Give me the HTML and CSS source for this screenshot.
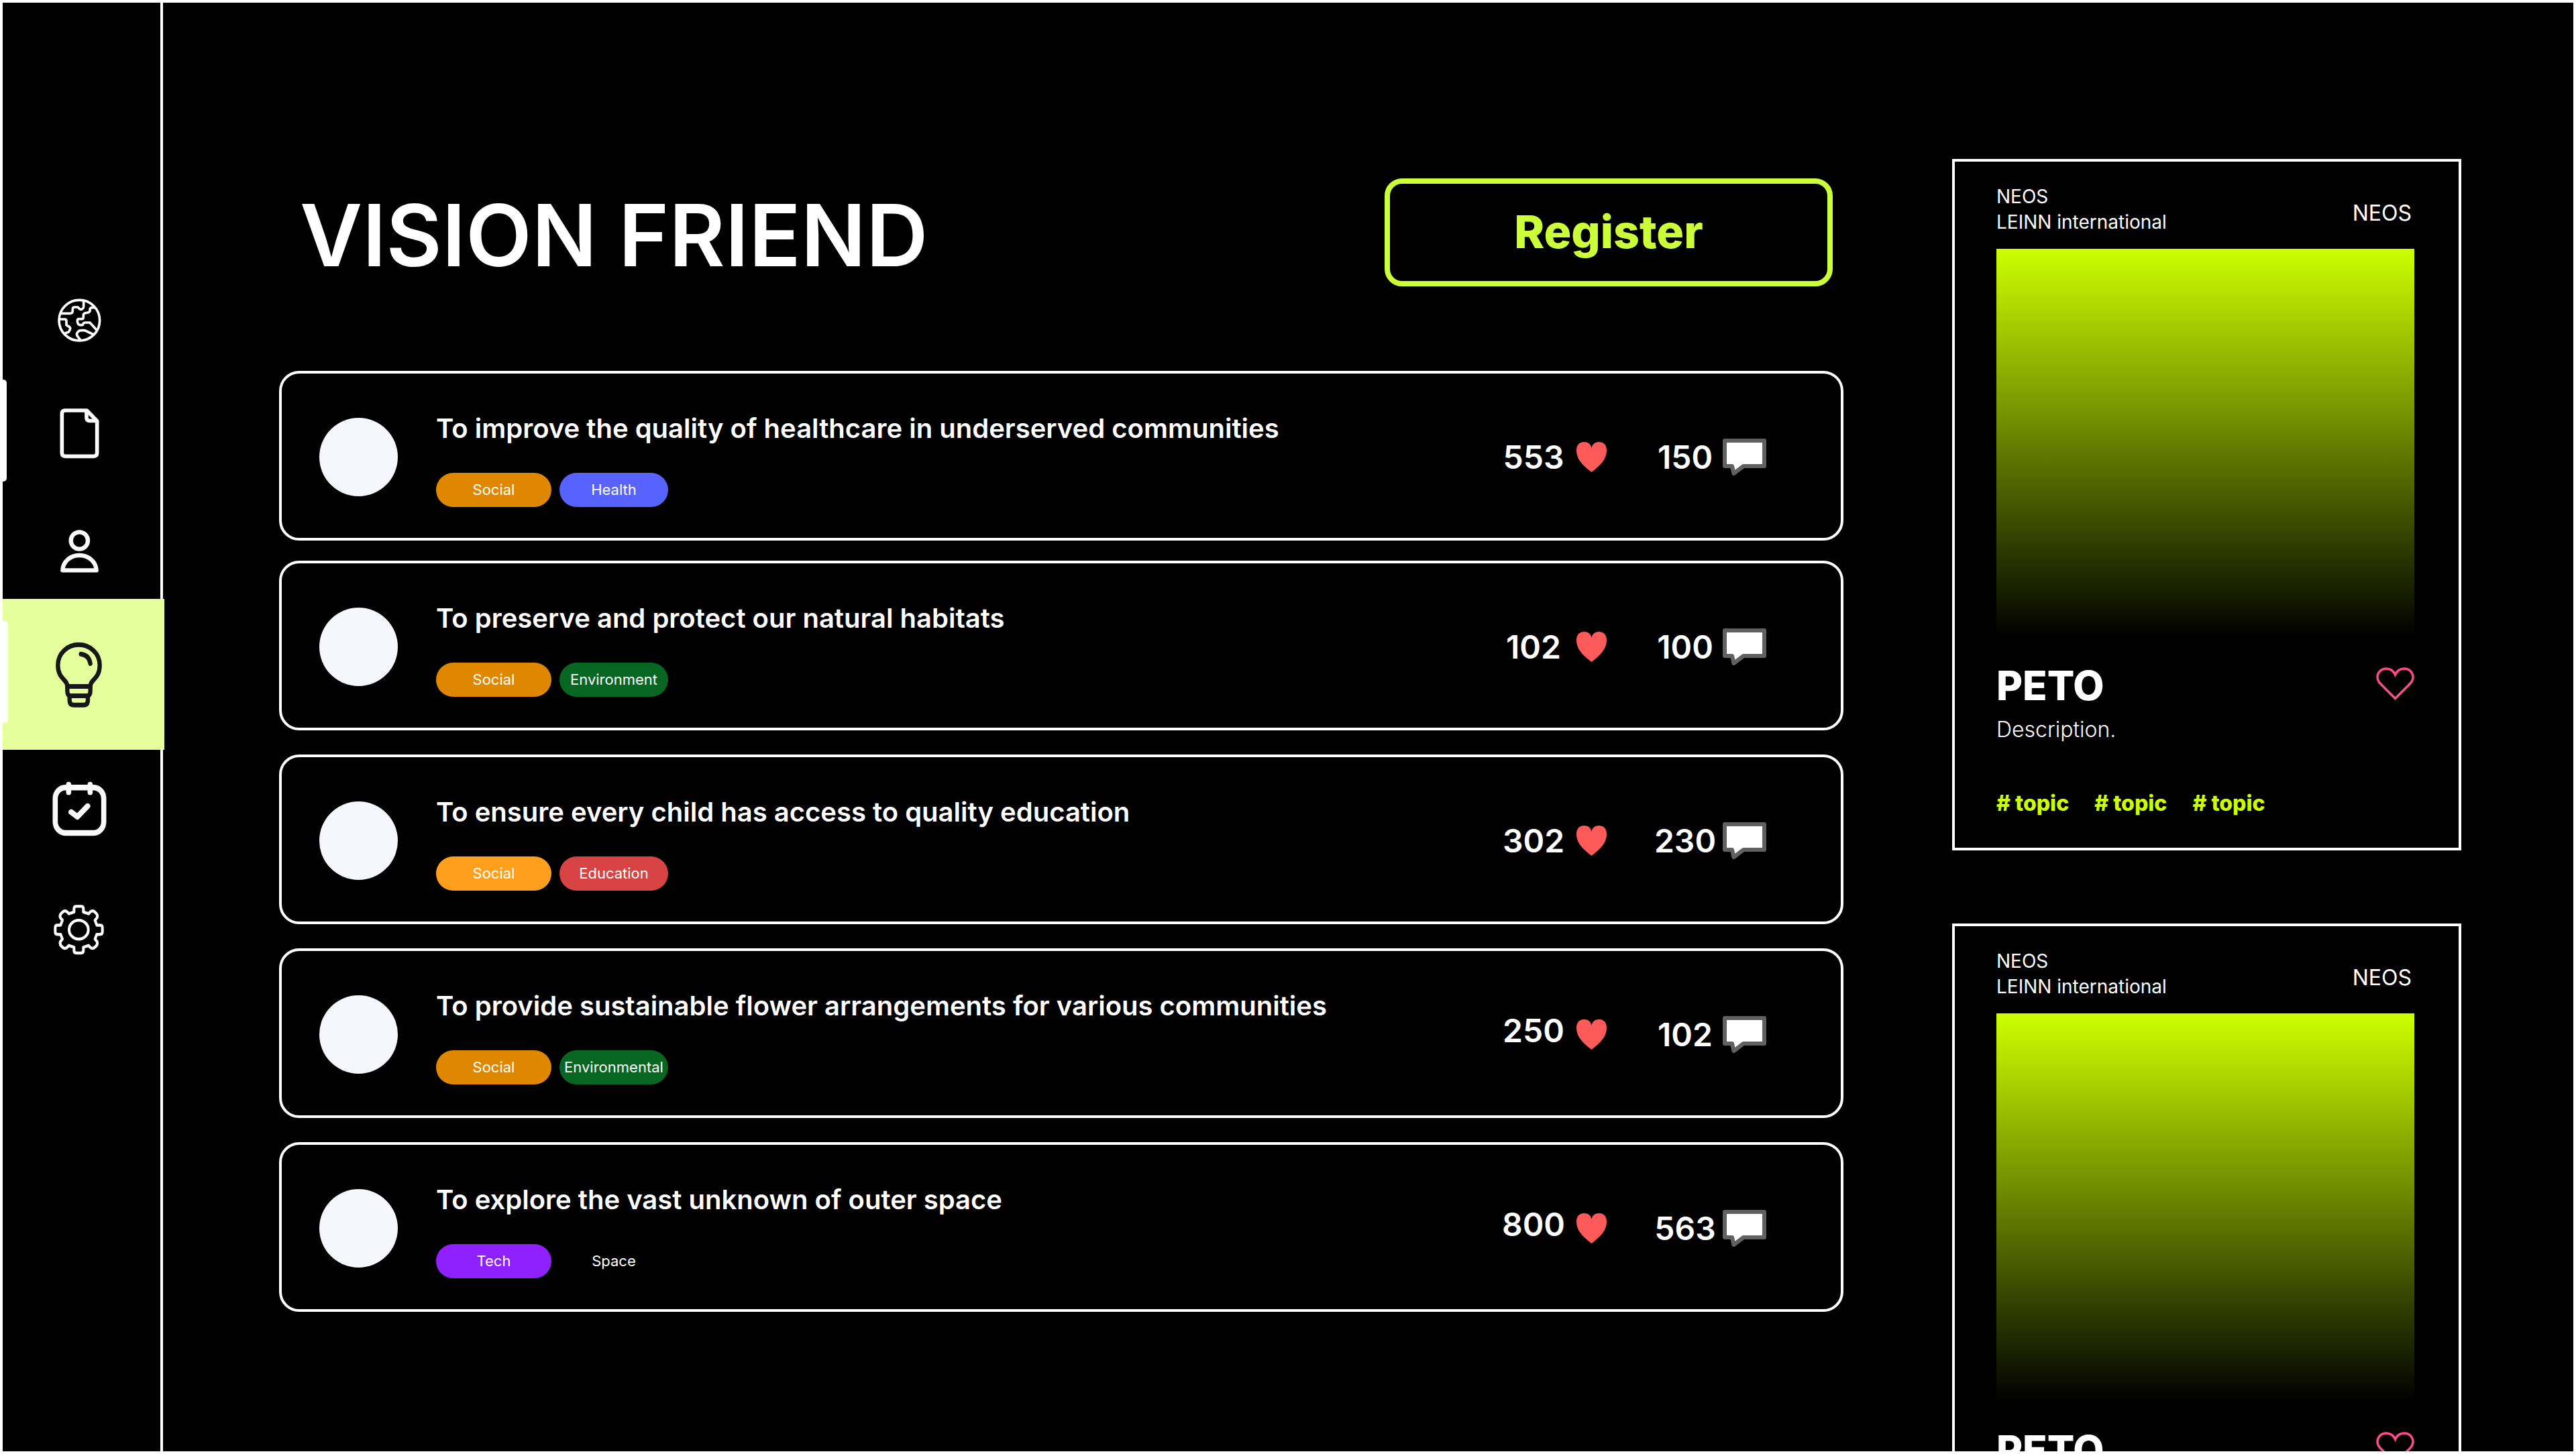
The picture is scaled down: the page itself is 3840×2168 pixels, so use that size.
FILE: index.html
```html
<!DOCTYPE html>
<html lang="en">
<head>
<meta charset="utf-8">
<meta name="viewport" content="width=device-width, initial-scale=1">
<title>Vision Friend</title>
<link rel="stylesheet" href="styles.css">
</head>
<body>
<svg class="sprite" aria-hidden="true">
  <symbol id="heart" viewBox="0 0 45 45">
    <path fill="#ff5a5a" d="M22.500 45C8 34 0 25 0 12.500C0 4 5 0 11.500 0C17 0 21.500 3 22.500 9C23.500 3 28 0 33.500 0C40 0 45 4 45 12.500C45 25 37 34 22.500 45Z"/>
  </symbol>
  <symbol id="comment" viewBox="0 0 65 55">
    <path fill="#fff" stroke="#616161" stroke-width="6" stroke-linejoin="round" d="M3 3H62V41H31L16.500 52L14 41H3Z"/>
  </symbol>
  <symbol id="heart-outline" viewBox="0 0 57 54">
    <path fill="none" stroke="#ff4a8d" stroke-width="3.500" d="M28.500 46.500L7 25C3 21 2 18 2 15C2 7 8 2 15 2C21 2 26 5.500 28.500 11C31 5.500 36 2 42 2C49 2 55 7 55 15C55 18 54 21 50 25Z"/>
  </symbol>
</svg>
<div class="app">
  <nav class="sidebar" aria-label="Main">
    <a class="nav-item" href="#world" aria-label="World">
      <svg class="nav-icon" viewBox="210 81 300 300" fill="none" stroke="#fff" stroke-width="11" stroke-linejoin="round" stroke-linecap="round">
        <circle cx="355" cy="233" r="91"/>
        <path d="M272 202H312Q325 202 325 188V182Q325 174 333 174H348L356 182Q362 186 368 182Q374 178 374 170V146"/>
        <path d="M423 176H408Q402 178 402 186V190Q402 195 396 197L380 201Q373 203 373 210V218Q373 227 365 227H353Q346 227 346 235Q346 252 358 254H366Q371 254 372 248Q374 243 382 243H402L432 276"/>
        <path d="M268 228H290Q297 228 297 236V254L311 263Q316 267 313 274L309 282Q306 288 298 288L290 292"/>
        <path d="M360 322L346 303Q340 294 347 286Q354 277 366 278H376Q384 279 394 285L418 296"/>
      </svg>
    </a>
    <a class="nav-item nav-item--tabbed" href="#documents" aria-label="Documents">
      <svg class="nav-icon" viewBox="210 588 300 300" fill="none" stroke="#fafafa" stroke-width="17" stroke-linejoin="round">
        <path d="M290 636H388L434 683V826Q434 841 419 841H292Q277 841 277 826V651Q277 636 290 636Z"/>
        <path d="M387 638V668Q387 682 401 682H434"/>
      </svg>
    </a>
    <a class="nav-item" href="#profile" aria-label="Profile">
      <svg class="nav-icon" viewBox="210 1113 300 300" fill="none" stroke="#fafafa" stroke-width="19" stroke-linejoin="round">
        <circle cx="355" cy="1215" r="38"/>
        <path d="M280 1348C282 1308 316 1281 355 1281S429 1308 431 1348Z"/>
      </svg>
    </a>
    <a class="nav-item nav-item--tabbed nav-item--active" href="#visions" aria-label="Visions" aria-current="page">
      <svg class="nav-icon" viewBox="210 235 300 300" fill="none" stroke="#171717" stroke-width="19" stroke-linejoin="round" stroke-linecap="round">
        <g transform="scale(1 1.11)">
          <path d="M301 394C301 364 259 366 259 308C259 262 300 226 352 226S446 262 446 308C446 366 404 364 404 394V412Q404 432 390 432H315Q301 432 301 412Z"/>
          <path d="M301 394H404M311 434V448Q311 469 330 469H374Q393 469 393 448V434"/>
          <path d="M362 264Q398 268 404 302"/>
        </g>
      </svg>
    </a>
    <a class="nav-item" href="#calendar" aria-label="Calendar">
      <svg class="nav-icon" viewBox="210 829 300 300" fill="none" stroke="#fafafa" stroke-width="23" stroke-linejoin="round" stroke-linecap="round">
        <g transform="scale(1 1.11)">
          <rect x="247" y="796" width="217" height="183" rx="45"/>
          <path d="M307 785V815M403 785V815M318 895L346 914L392 871"/>
        </g>
      </svg>
    </a>
    <a class="nav-item" href="#settings" aria-label="Settings">
      <svg class="nav-icon" viewBox="210 1368 300 300" fill="none" stroke="#fff" stroke-width="12" stroke-linejoin="round">
        <g transform="scale(1 1.11)">
          <path d="M331 1297V1284Q331 1274 341 1274H363Q373 1274 373 1284V1297L396 1304L403 1297Q411 1290 420 1294L431 1303Q438 1311 434 1320L425 1330L433 1350H447Q458 1350 458 1360V1377Q458 1387 447 1387H433L425 1406L434 1416Q438 1425 431 1433L420 1442Q411 1446 403 1439L396 1432L373 1439V1452Q373 1462 363 1462H341Q331 1462 331 1452V1439L308 1432L301 1439Q293 1446 284 1442L273 1433Q266 1425 270 1416L279 1406L271 1387H257Q247 1387 247 1377V1360Q247 1350 257 1350H271L279 1330L270 1320Q266 1311 273 1303L284 1294Q293 1290 301 1297L308 1304Z"/>
          <ellipse cx="352" cy="1368" rx="43" ry="38"/>
        </g>
      </svg>
    </a>
  </nav>

  <main class="main">
    <header class="main-header">
      <h1 class="page-title">VISION FRIEND</h1>
      <button class="register" type="button">Register</button>
    </header>
    <ul class="visions">
      <li class="vision">
        <span class="avatar"></span>
        <div class="vision-body">
          <h2 class="vision-title">To improve the quality of healthcare in underserved communities</h2>
          <div class="tags"><span class="tag tag--lead tag--social">Social</span><span class="tag tag--health">Health</span></div>
        </div>
        <button class="stat stat--likes" type="button" aria-label="553 likes"><span class="count">553</span><svg class="heart"><use href="#heart"/></svg></button>
        <button class="stat stat--comments" type="button" aria-label="150 comments"><span class="count">150</span><svg class="comment"><use href="#comment"/></svg></button>
      </li>
      <li class="vision">
        <span class="avatar"></span>
        <div class="vision-body">
          <h2 class="vision-title">To preserve and protect our natural habitats</h2>
          <div class="tags"><span class="tag tag--lead tag--social">Social</span><span class="tag tag--environment">Environment</span></div>
        </div>
        <button class="stat stat--likes" type="button" aria-label="102 likes"><span class="count">102</span><svg class="heart"><use href="#heart"/></svg></button>
        <button class="stat stat--comments" type="button" aria-label="100 comments"><span class="count">100</span><svg class="comment"><use href="#comment"/></svg></button>
      </li>
      <li class="vision">
        <span class="avatar"></span>
        <div class="vision-body">
          <h2 class="vision-title">To ensure every child has access to quality education</h2>
          <div class="tags"><span class="tag tag--lead tag--social-bright">Social</span><span class="tag tag--education">Education</span></div>
        </div>
        <button class="stat stat--likes" type="button" aria-label="302 likes"><span class="count">302</span><svg class="heart"><use href="#heart"/></svg></button>
        <button class="stat stat--comments" type="button" aria-label="230 comments"><span class="count">230</span><svg class="comment"><use href="#comment"/></svg></button>
      </li>
      <li class="vision">
        <span class="avatar"></span>
        <div class="vision-body">
          <h2 class="vision-title">To provide sustainable flower arrangements for various communities</h2>
          <div class="tags"><span class="tag tag--lead tag--social">Social</span><span class="tag tag--environment">Environmental</span></div>
        </div>
        <button class="stat stat--likes stat--raised" type="button" aria-label="250 likes"><span class="count">250</span><svg class="heart"><use href="#heart"/></svg></button>
        <button class="stat stat--comments" type="button" aria-label="102 comments"><span class="count">102</span><svg class="comment"><use href="#comment"/></svg></button>
      </li>
      <li class="vision">
        <span class="avatar"></span>
        <div class="vision-body">
          <h2 class="vision-title">To explore the vast unknown of outer space</h2>
          <div class="tags"><span class="tag tag--lead tag--tech">Tech</span><span class="tag tag--space">Space</span></div>
        </div>
        <button class="stat stat--likes stat--raised" type="button" aria-label="800 likes"><span class="count">800</span><svg class="heart"><use href="#heart"/></svg></button>
        <button class="stat stat--comments" type="button" aria-label="563 comments"><span class="count">563</span><svg class="comment"><use href="#comment"/></svg></button>
      </li>
    </ul>
  </main>

  <aside class="projects" aria-label="Projects">
    <article class="card">
      <header class="card-head">
        <p class="card-team">NEOS<br>LEINN international</p>
        <span class="card-brand">NEOS</span>
      </header>
      <div class="card-art"></div>
      <div class="card-title-row">
        <h2 class="card-title">PETO</h2>
        <button class="like" type="button" aria-label="Like"><svg class="like-icon"><use href="#heart-outline"/></svg></button>
      </div>
      <p class="card-text">Description.</p>
      <div class="topics"><a class="topic" href="#topic"># topic</a><a class="topic" href="#topic"># topic</a><a class="topic" href="#topic"># topic</a></div>
    </article>
    <article class="card">
      <header class="card-head">
        <p class="card-team">NEOS<br>LEINN international</p>
        <span class="card-brand">NEOS</span>
      </header>
      <div class="card-art"></div>
      <div class="card-title-row">
        <h2 class="card-title">PETO</h2>
        <button class="like" type="button" aria-label="Like"><svg class="like-icon"><use href="#heart-outline"/></svg></button>
      </div>
      <p class="card-text">Description.</p>
      <div class="topics"><a class="topic" href="#topic"># topic</a><a class="topic" href="#topic"># topic</a><a class="topic" href="#topic"># topic</a></div>
    </article>
  </aside>
</div>
</body>
</html>
```
FILE: styles.css
```css
* {
  box-sizing: border-box;
  margin: 0;
  padding: 0;
}

body {
  background: #000;
  color: #fff;
  font-family: Inter, "Liberation Sans", sans-serif;
}

button {
  background: none;
  border: 0;
  color: inherit;
  font: inherit;
  cursor: pointer;
}

a {
  color: inherit;
  text-decoration: none;
}

.sprite {
  position: absolute;
  width: 0;
  height: 0;
}

.app {
  display: grid;
  grid-template-columns: 239px minmax(0, 1fr) auto;
  height: 100vh;
  border: 4px solid #fff;
  overflow: hidden;
}

/* Sidebar */
.sidebar {
  display: grid;
  grid-template-rows: 130px 208px 143px 225px 176px 184px;
  align-content: start;
  padding-top: 408px;
  border-right: 4px solid #fff;
}

.nav-item {
  position: relative;
  display: flex;
  align-items: center;
  padding-left: 66px;
}

.nav-icon {
  width: 100px;
  height: 100px;
}

.nav-item--tabbed::before {
  content: "";
  position: absolute;
  left: 0;
  top: 24px;
  width: 6px;
  height: 152px;
  border-radius: 0 5px 5px 0;
  background: #fff;
}

.nav-item--active {
  margin-right: -6px;
  background: #e4ff9b;
}

.nav-item--active::before {
  top: 33px;
  width: 8px;
}

/* Vision list */
.main {
  padding: 262px 0 0 173px;
}

.main-header {
  display: flex;
  align-items: center;
  justify-content: space-between;
  padding: 0 16px 0 31px;
  margin-bottom: 126px;
}

.page-title {
  padding-top: 8px;
  font-size: 128px;
  line-height: 152px;
  font-weight: 600;
}

.register {
  width: 668px;
  height: 161px;
  padding-bottom: 4px;
  border: 8px solid #caff3a;
  border-radius: 26px;
  color: #caff3a;
  font-size: 68px;
  font-weight: 800;
}

.visions {
  list-style: none;
}

.vision {
  display: flex;
  align-items: center;
  padding: 50px 111px 46px 56px;
  border: 4px solid #fff;
  border-radius: 30px;
}

.vision + .vision {
  margin-top: 36px;
}

.vision:first-child + .vision {
  margin-top: 30px;
}

.avatar {
  width: 117px;
  height: 117px;
  border-radius: 50%;
  background: #f6f7fc;
}

.vision-body {
  flex: 1;
  padding: 8px 0 0 57px;
}

.vision-title {
  margin-bottom: 42px;
  font-size: 40px;
  line-height: 48px;
  font-weight: 600;
}

.tags {
  display: flex;
  gap: 12px;
}

.tag {
  width: 162px;
  border-radius: 26px;
  font-size: 22px;
  line-height: 51px;
  font-weight: 400;
  text-align: center;
}

.tag--lead { width: 172px; }
.tag--social { background: #e08700; }
.tag--social-bright { background: #ff9f1c; }
.tag--health { background: #5863ff; }
.tag--environment { background: #086623; }
.tag--education { background: #d84343; }
.tag--tech { background: #8f20ff; }
.tag--space { background: #000; }

.stat {
  display: flex;
  align-items: center;
  height: 60px;
  gap: 14px;
}

.stat--comments {
  gap: 6px;
  margin-left: 67px;
}

.stat--raised {
  align-items: flex-start;
}

.count {
  width: 100px;
  font-size: 48px;
  line-height: 48px;
  font-weight: 600;
  text-align: center;
}

.heart {
  align-self: center;
  width: 45px;
  height: 45px;
}

.comment {
  width: 65px;
  height: 55px;
}

/* Project cards */
.projects {
  display: flex;
  flex-direction: column;
  gap: 109px;
  padding: 233px 167px 0 162px;
  min-height: 0;
}

.card {
  width: 759px;
  flex-shrink: 0;
  padding: 33px 66px 46px 62px;
  border: 4px solid #fff;
}

.card-head {
  display: flex;
  align-items: center;
  justify-content: space-between;
  margin-bottom: 21px;
}

.card-team {
  font-size: 28px;
  line-height: 38px;
}

.card-brand {
  padding: 12px 4px 0 0;
  font-size: 32px;
  line-height: 40px;
}

.card-art {
  height: 580px;
  margin-bottom: 35px;
  background: linear-gradient(#ccff00, #000);
}

.card-title-row {
  display: flex;
  align-items: center;
  justify-content: space-between;
  margin-bottom: 10px;
}

.card-title {
  font-size: 60px;
  line-height: 72px;
  font-weight: 800;
}

.like,
.like-icon {
  display: block;
  width: 57px;
  height: 54px;
}

.card-text {
  margin-bottom: 70px;
  font-size: 32px;
  line-height: 40px;
  font-weight: 300;
}

.topics {
  display: flex;
  gap: 38px;
}

.topic {
  color: #ccff00;
  font-size: 32px;
  line-height: 40px;
  font-weight: 800;
}
```
